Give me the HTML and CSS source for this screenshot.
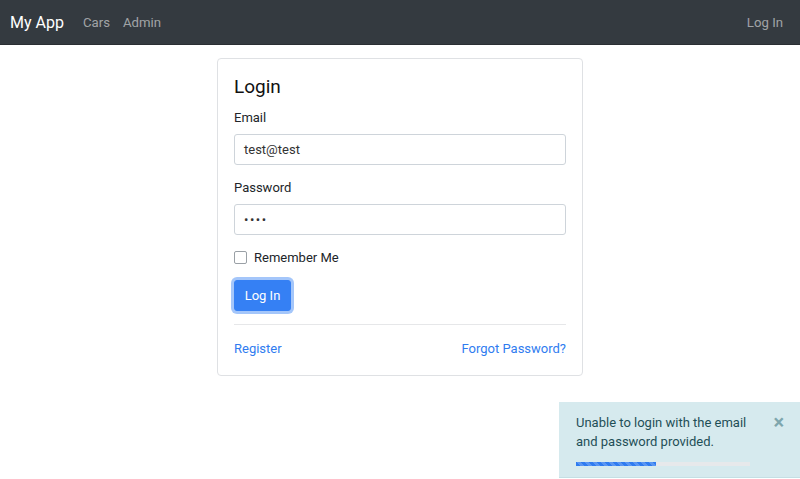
FILE: index.html
```html
<!DOCTYPE html>
<html>
<head>
<meta charset="utf-8">
<link rel="stylesheet" href="styles.css">
</head>
<body>
<nav class="navbar">
  <a class="brand">My App</a>
  <a class="nav-link">Cars</a>
  <a class="nav-link">Admin</a>
  <span class="spacer"></span>
  <a class="nav-link">Log In</a>
</nav>
<main class="main">
  <div class="card">
    <h1 class="title">Login</h1>
    <label class="label">Email</label>
    <div class="input">test@test</div>
    <label class="label">Password</label>
    <div class="input dots">••••</div>
    <div class="check-row"><span class="checkbox"></span><span>Remember Me</span></div>
    <div class="btn-row"><button class="btn">Log In</button></div>
    <hr class="divider">
    <div class="links"><a class="link">Register</a><a class="link">Forgot Password?</a></div>
  </div>
</main>
<div class="toast">
  <div class="toast-body">
    <p class="toast-text">Unable to login with the email and password provided.</p>
    <span class="close">×</span>
  </div>
  <div class="progress"><div class="progress-bar" style="width:46%"></div></div>
</div>
</body>
</html>
```
FILE: styles.css
```css
html, body { margin: 0; padding: 0; }
body {
  font-family: Roboto, "Liberation Sans", sans-serif;
  font-size: 13px;
  color: #212529;
  background: #fff;
  height: 479px;
  overflow: hidden;
  position: relative;
}
.navbar {
  height: 44px;
  background: #343a40;
  border-bottom: 1px solid #2a2e33;
  display: flex;
  align-items: center;
  padding: 0 17px 0 10px;
}
.brand { color: #fff; font-size: 16px; margin-right: 19px; }
.nav-link { color: rgba(255,255,255,.55); font-size: 13.2px; margin-right: 13px; }
.spacer { flex: 1; }
.navbar .nav-link:last-child { margin-right: 0; }
.main { display: flex; justify-content: center; padding-top: 13px; }
.card {
  width: 332px;
  border: 1px solid #dfe1e4;
  border-radius: 4px;
  padding: 16px;
  display: flex;
  flex-direction: column;
}
.title { font-size: 19px; font-weight: 400; line-height: 24px; margin: 0 0 8px; color: #111; }
.label { line-height: 21px; margin-bottom: 6px; }
.input {
  height: 29px;
  border: 1px solid #ced4da;
  border-radius: 3px;
  padding: 0 9px;
  line-height: 29px;
  margin-bottom: 12px;
  color: #333;
}
.dots { letter-spacing: 1.5px; font-size: 13px; }
.check-row { display: flex; align-items: center; line-height: 21px; margin-bottom: 12px; }
.checkbox {
  width: 11px; height: 11px;
  border: 1px solid #9aa0a6;
  border-radius: 2px;
  margin-right: 7px;
}
.btn-row { display: flex; }
.btn {
  font-family: inherit;
  font-size: 13px;
  color: #fff;
  background: #3580f4;
  border: 1px solid #3580f4;
  border-radius: 3px;
  height: 31px;
  width: 57px;
  padding: 0;
  box-shadow: 0 0 0 3px rgba(53,128,244,.45);
}
.divider { border: 0; border-top: 1px solid #e6e7e9; margin: 13px 0; width: 100%; }
.links { display: flex; justify-content: space-between; line-height: 21px; }
.link { color: #2f7cf0; }
.toast {
  position: absolute;
  left: 559px;
  top: 402px;
  width: 241px;
  height: 76px;
  background: #d6eaee;
  border-bottom: 1px solid #c4dfe4;
  box-sizing: border-box;
  padding: 11px 17px 0;
  color: #1f4f57;
}
.toast-body { display: flex; justify-content: space-between; }
.toast-text { margin: 0; width: 186px; line-height: 19px; }
.close { color: #7ea6ad; font-size: 20px; font-weight: 700; line-height: 19px; margin-right: -1px; }
.progress { margin-top: 11px; width: 174px; height: 4px; background: #e7e9eb; }
.progress-bar {
  height: 100%;
  background-color: #2f7cf0;
  background-image: linear-gradient(45deg, rgba(255,255,255,.2) 25%, transparent 25%, transparent 50%, rgba(255,255,255,.2) 50%, rgba(255,255,255,.2) 75%, transparent 75%, transparent);
  background-size: 8px 8px;
}
```
